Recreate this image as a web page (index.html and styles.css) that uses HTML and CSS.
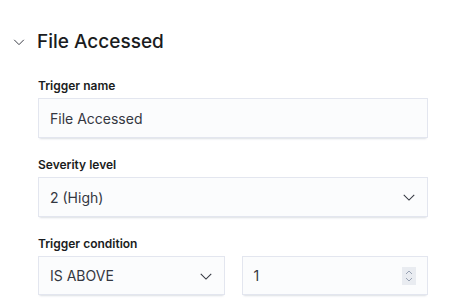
FILE: index.html
```html
<!DOCTYPE html>
<html>
<head>
<meta charset="utf-8">
<link rel="stylesheet" href="styles.css">
</head>
<body>
<div class="accordion">
  <div class="acc-header">
    <svg class="acc-arrow" width="16" height="16" viewBox="0 0 16 16"><path d="M2.5 5.5 L8 11 L13.5 5.5" fill="none" stroke="#343741" stroke-width="1.1"/></svg>
    <h3 class="acc-title">File Accessed</h3>
  </div>
  <div class="acc-body">
    <div class="field">
      <label class="label">Trigger name</label>
      <div class="control"><span class="value">File Accessed</span></div>
    </div>
    <div class="field">
      <label class="label">Severity level</label>
      <div class="control select"><span class="value">2 (High)</span>
        <svg class="chev" width="16" height="16" viewBox="0 0 16 16"><path d="M2 5.5 L8 11.5 L14 5.5" fill="none" stroke="#343741" stroke-width="1.2"/></svg>
      </div>
    </div>
    <div class="field">
      <label class="label">Trigger condition</label>
      <div class="row">
        <div class="control select"><span class="value">IS ABOVE</span>
          <svg class="chev" width="16" height="16" viewBox="0 0 16 16"><path d="M2 5.5 L8 11.5 L14 5.5" fill="none" stroke="#343741" stroke-width="1.2"/></svg>
        </div>
        <div class="control number"><span class="value">1</span>
          <div class="spinner">
            <svg width="14" height="18" viewBox="0 0 14 18"><path d="M4 7 L7 4 L10 7" fill="none" stroke="#98a2b3" stroke-width="1"/><path d="M4 11 L7 14 L10 11" fill="none" stroke="#98a2b3" stroke-width="1"/></svg>
          </div>
        </div>
      </div>
    </div>
  </div>
</div>
</body>
</html>
```

FILE: styles.css
```css
html, body {
  margin: 0;
  padding: 0;
  background: #ffffff;
  font-family: Inter, "Noto Sans", sans-serif;
  color: #343741;
}
.accordion {
  padding: 29px 26px 0 12px;
}
.acc-header {
  display: flex;
  align-items: center;
  height: 26px;
}
.acc-arrow {
  width: 14px;
  height: 14px;
  margin-right: 11px;
}
.acc-title {
  margin: 0;
  font-size: 19px;
  font-weight: 500;
  color: #1a1c21;
  line-height: 26px;
}
.acc-body {
  padding-left: 26px;
  padding-top: 21px;
}
.field {
  display: flex;
  flex-direction: column;
  margin-bottom: 17px;
}
.label {
  font-size: 12px;
  font-weight: 600;
  color: #1a1c21;
  line-height: 20px;
  margin-bottom: 2px;
}
.control {
  height: 40px;
  background: #fbfcfd;
  box-sizing: border-box;
  box-shadow: 0 1px 1px -1px rgba(152,162,179,.3), 0 3px 2px -2px rgba(152,162,179,.3), inset 0 0 0 1px rgba(15,39,118,.1);
  display: flex;
  align-items: center;
  padding: 0 12px;
  font-size: 14px;
  color: #343741;
}
.control .value {
  flex: 1;
}
.select .chev {
  width: 14px;
  height: 14px;
}
.row {
  display: grid;
  grid-template-columns: 1fr 1fr;
  gap: 17px;
}
.row .control {
  height: 39px;
}
.spinner {
  width: 14px;
  height: 18px;
  background: #e9ecf1;
  display: flex;
}
```
